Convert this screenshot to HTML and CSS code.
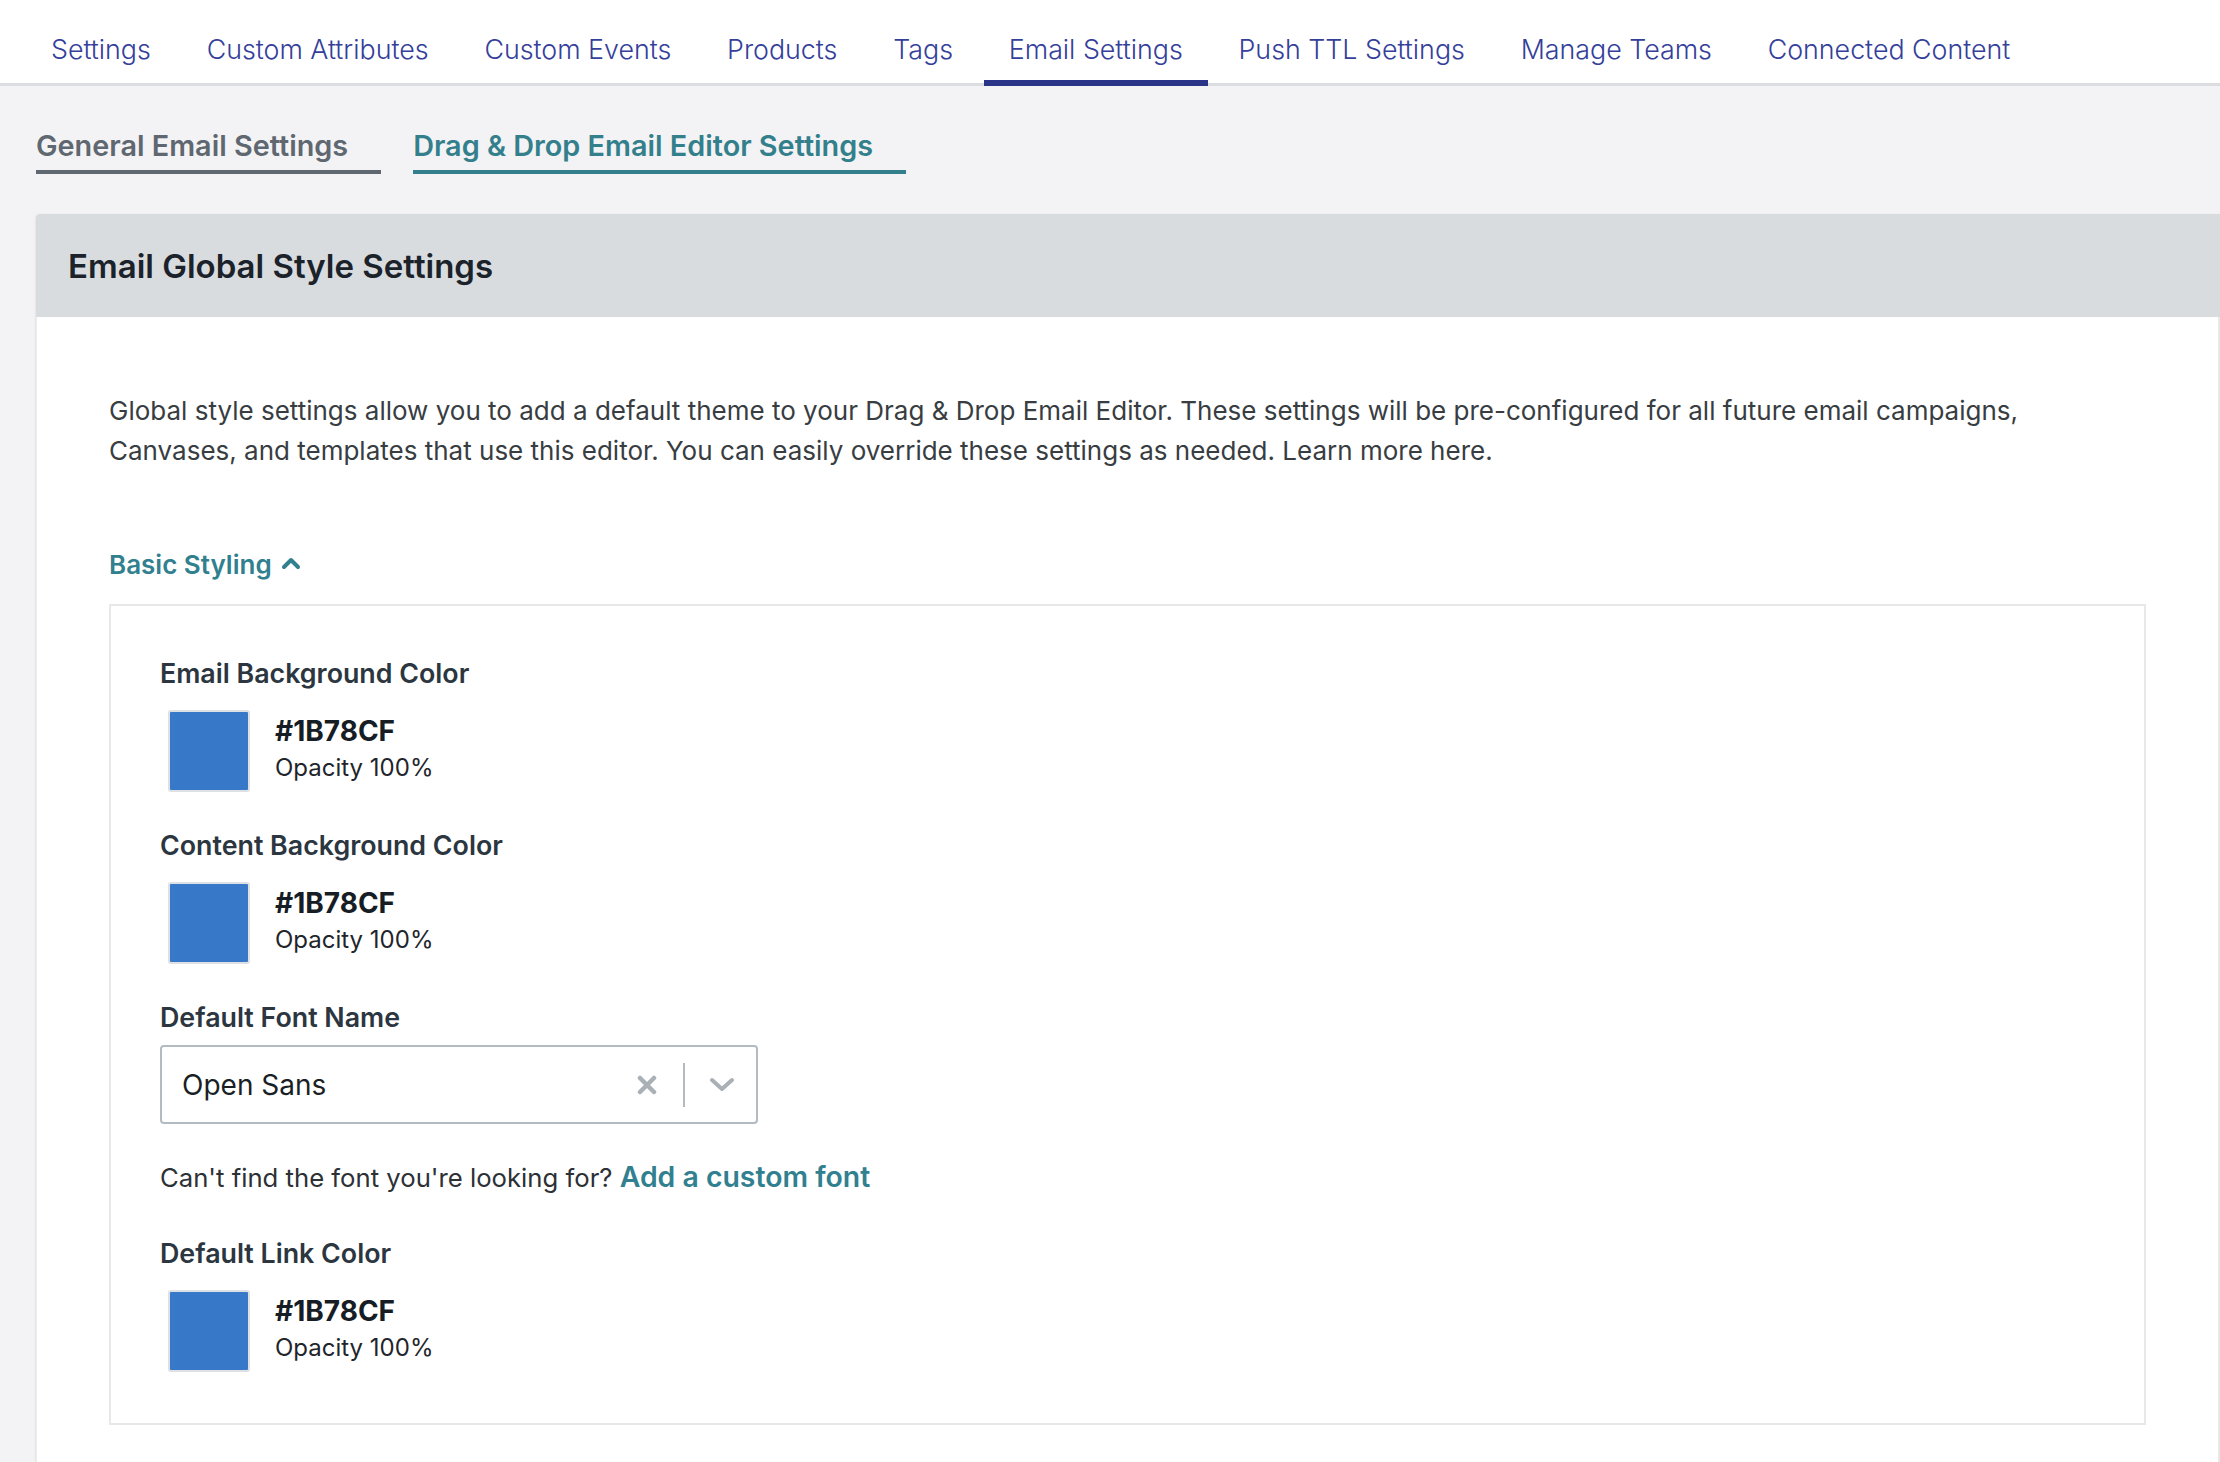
FILE: index.html
```html
<!DOCTYPE html>
<html lang="en">
<head>
<meta charset="utf-8">
<title>Email Settings</title>
<link rel="stylesheet" href="styles.css">
</head>
<body>
<nav class="topnav">
  <a class="nav-item">Settings</a>
  <a class="nav-item">Custom Attributes</a>
  <a class="nav-item">Custom Events</a>
  <a class="nav-item">Products</a>
  <a class="nav-item">Tags</a>
  <a class="nav-item active">Email Settings</a>
  <a class="nav-item">Push TTL Settings</a>
  <a class="nav-item">Manage Teams</a>
  <a class="nav-item">Connected Content</a>
</nav>
<main class="main">
  <div class="subtabs">
    <a class="subtab general">General Email Settings</a>
    <a class="subtab dnd">Drag &amp; Drop Email Editor Settings</a>
  </div>
  <section class="card">
    <header class="card-header">
      <h2 class="card-title">Email Global Style Settings</h2>
    </header>
    <div class="card-body">
      <p class="intro">Global style settings allow you to add a default theme to your Drag &amp; Drop Email Editor. These settings will be pre-configured for all future email campaigns, Canvases, and templates that use this editor. You can easily override these settings as needed. Learn more here.</p>
      <div class="toggle">Basic Styling
        <svg class="chev-up" width="20" height="14" viewBox="0 0 20 14"><polyline points="3,11 10,4 17,11" fill="none" stroke="#31808f" stroke-width="4" stroke-linecap="round" stroke-linejoin="round"/></svg>
      </div>
      <div class="box">
        <div class="field">
          <div class="label">Email Background Color</div>
          <div class="color-row">
            <div class="swatch"></div>
            <div class="color-info">
              <div class="hex">#1B78CF</div>
              <div class="opacity">Opacity 100%</div>
            </div>
          </div>
        </div>
        <div class="field">
          <div class="label">Content Background Color</div>
          <div class="color-row">
            <div class="swatch"></div>
            <div class="color-info">
              <div class="hex">#1B78CF</div>
              <div class="opacity">Opacity 100%</div>
            </div>
          </div>
        </div>
        <div class="field font-field">
          <div class="label">Default Font Name</div>
          <div class="select">
            <span class="select-value">Open Sans</span>
            <span class="select-controls">
              <svg class="clear-icon" width="20" height="20" viewBox="0 0 20 20"><path d="M3 3 L17 17 M17 3 L3 17" stroke="#a9b1b7" stroke-width="4.5" stroke-linecap="round"/></svg>
              <span class="sep"></span>
              <svg class="down-icon" width="26" height="16" viewBox="0 0 26 16"><polyline points="3,3 13,12 23,3" fill="none" stroke="#a9b1b7" stroke-width="4" stroke-linecap="round" stroke-linejoin="round"/></svg>
            </span>
          </div>
          <p class="hint">Can't find the font you're looking for? <a class="link">Add a custom font</a></p>
        </div>
        <div class="field last">
          <div class="label">Default Link Color</div>
          <div class="color-row">
            <div class="swatch"></div>
            <div class="color-info">
              <div class="hex">#1B78CF</div>
              <div class="opacity">Opacity 100%</div>
            </div>
          </div>
        </div>
      </div>
    </div>
  </section>
</main>
</body>
</html>
```
FILE: styles.css
```css
* { box-sizing: border-box; }
html, body { margin: 0; padding: 0; }
body {
  width: 2220px;
  height: 1462px;
  overflow: hidden;
  background: #f3f3f5;
  font-family: Inter, Lato, "Open Sans", Arial, sans-serif;
  color: #2c3640;
}

.topnav {
  display: flex;
  height: 86px;
  padding-left: 26px;
  gap: 5.8px;
  background: #ffffff;
  box-shadow: inset 0 -3px 0 #dcdde1;
}
.nav-item {
  display: flex;
  align-items: center;
  padding: 11px 25px 0;
  font-size: 26.8px;
  font-weight: 300;
  color: #34409a;
  white-space: nowrap;
}
.nav-item.active {
  box-shadow: inset 0 -6px 0 #2a3488;
}

.main {
  padding-left: 36px;
}

.subtabs {
  display: flex;
  gap: 32px;
  padding-top: 40px;
  margin-bottom: 40px;
}
.subtab {
  display: block;
  height: 48px;
  line-height: 40px;
  padding-right: 33px;
  font-size: 28.8px;
  font-weight: 600;
  border-bottom: 4px solid;
  padding-bottom: 4px;
  white-space: nowrap;
}
.subtab.general { color: #5f6770; border-color: #5f6770; }
.subtab.dnd { color: #33808c; border-color: #33808c; }

.card {
  background: #ffffff;
  border-radius: 4px 0 0 0;
  overflow: hidden;
  height: 1248px;
  box-shadow: -1px 0 2px rgba(0,0,0,0.06);
}
.card-header {
  height: 103px;
  display: flex;
  align-items: center;
  padding-left: 32px;
  background: #d8dcdf;
}
.card-title {
  margin: 0;
  font-size: 33px;
  font-weight: 600;
  color: #1b222a;
}
.card-body {
  padding: 74px 72px 0 72px;
  border-right: 2px solid #e8e8e8;
  border-left: 1px solid #ececec;
  height: 1145px;
}
.intro {
  margin: 0;
  font-size: 26px;
  line-height: 40px;
  color: #383d42;
  max-width: 1960px;
}
.toggle {
  display: flex;
  align-items: center;
  gap: 9px;
  margin-top: 75px;
  height: 36px;
  font-size: 26px;
  font-weight: 600;
  color: #31808f;
}
.chev-up { margin-top: -2px; }

.box {
  margin-top: 22px;
  border: 2px solid #e8e8e8;
  padding: 49px 49px 51px;
}
.field { margin-bottom: 35px; }
.field.font-field { margin-bottom: 38px; }
.field.last { margin-bottom: 0; }
.label {
  height: 36px;
  line-height: 36px;
  font-size: 26.8px;
  font-weight: 600;
  color: #2c3640;
}
.color-row {
  display: flex;
  margin-top: 19px;
  padding-left: 8px;
}
.swatch {
  width: 82px;
  height: 82px;
  background: #3878c8;
  border: 2px solid #dde1e4;
  border-radius: 3px;
}
.color-info {
  margin-left: 25px;
  padding-top: 3px;
}
.hex {
  height: 36px;
  line-height: 36px;
  font-size: 28px;
  font-weight: 700;
  color: #161d25;
}
.opacity {
  height: 38px;
  line-height: 38px;
  font-size: 24px;
  color: #1f252b;
}

.select {
  display: flex;
  align-items: center;
  justify-content: space-between;
  width: 598px;
  height: 79px;
  margin-top: 10px;
  padding-left: 20px;
  border: 2px solid #b3bbc1;
  border-radius: 4px;
  background: #ffffff;
}
.select-value {
  font-size: 28px;
  color: #1a1f25;
}
.select-controls {
  display: flex;
  align-items: center;
}
.clear-icon { margin-right: 26px; }
.sep {
  width: 2px;
  height: 44px;
  background: #b3bbc1;
}
.down-icon { margin: 0 21px 0 24px; }

.hint {
  margin: 33px 0 0;
  height: 40px;
  line-height: 40px;
  font-size: 25.7px;
  color: #2c3136;
}
.link {
  font-size: 28.4px;
  font-weight: 600;
  color: #31808f;
}
```
